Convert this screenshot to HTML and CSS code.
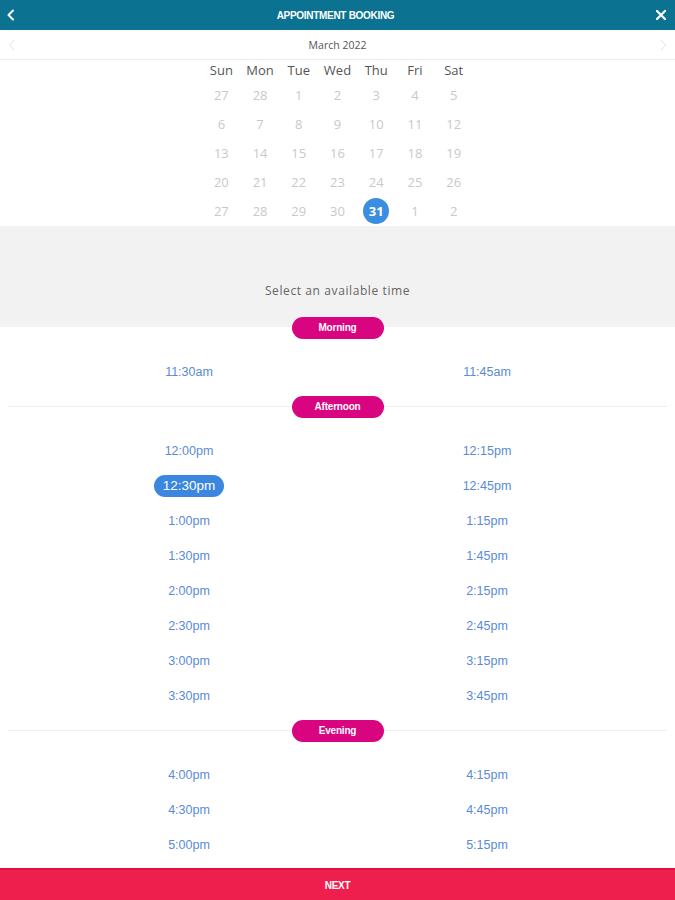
FILE: index.html
```
<!DOCTYPE html>
<html>
<head>
<meta charset="utf-8">
<link rel="stylesheet" href="styles.css">
</head>
<body>
<div class="app">
  <header class="topbar">
    <svg class="icon back" width="10" height="12" viewBox="0 0 10 12"><path d="M7 1.5 L2.5 6 L7 10.5" fill="none" stroke="#fff" stroke-width="2" stroke-linecap="round" stroke-linejoin="round"/></svg>
    <div class="title">APPOINTMENT BOOKING</div>
    <svg class="icon close" width="12" height="12" viewBox="0 0 12 12"><path d="M2 2 L10 10 M10 2 L2 10" fill="none" stroke="#fff" stroke-width="2.2" stroke-linecap="round"/></svg>
  </header>
  <div class="monthbar">
    <svg class="chev" width="8" height="12" viewBox="0 0 8 12"><path d="M6 1 L1.5 6 L6 11" fill="none" stroke="#e2e2e2" stroke-width="1"/></svg>
    <div class="month">March 2022</div>
    <svg class="chev" width="8" height="12" viewBox="0 0 8 12"><path d="M2 1 L6.5 6 L2 11" fill="none" stroke="#e2e2e2" stroke-width="1"/></svg>
  </div>
  <div class="calendar">
    <div class="wd">Sun</div><div class="wd">Mon</div><div class="wd">Tue</div><div class="wd">Wed</div><div class="wd">Thu</div><div class="wd">Fri</div><div class="wd">Sat</div>
    <div class="d">27</div><div class="d">28</div><div class="d">1</div><div class="d">2</div><div class="d">3</div><div class="d">4</div><div class="d">5</div>
    <div class="d">6</div><div class="d">7</div><div class="d">8</div><div class="d">9</div><div class="d">10</div><div class="d">11</div><div class="d">12</div>
    <div class="d">13</div><div class="d">14</div><div class="d">15</div><div class="d">16</div><div class="d">17</div><div class="d">18</div><div class="d">19</div>
    <div class="d">20</div><div class="d">21</div><div class="d">22</div><div class="d">23</div><div class="d">24</div><div class="d">25</div><div class="d">26</div>
    <div class="d">27</div><div class="d">28</div><div class="d">29</div><div class="d">30</div><div class="d"><span class="sel">31</span></div><div class="d">1</div><div class="d">2</div>
  </div>
  <div class="prompt">Select an available time</div>
  <div class="divider first"><span class="pill">Morning</span></div>
  <div class="times">
    <div class="t">11:30am</div><div class="t">11:45am</div>
  </div>
  <div class="divider"><span class="pill">Afternoon</span></div>
  <div class="times">
    <div class="t">12:00pm</div><div class="t">12:15pm</div>
    <div class="t"><span class="tsel">12:30pm</span></div><div class="t">12:45pm</div>
    <div class="t">1:00pm</div><div class="t">1:15pm</div>
    <div class="t">1:30pm</div><div class="t">1:45pm</div>
    <div class="t">2:00pm</div><div class="t">2:15pm</div>
    <div class="t">2:30pm</div><div class="t">2:45pm</div>
    <div class="t">3:00pm</div><div class="t">3:15pm</div>
    <div class="t">3:30pm</div><div class="t">3:45pm</div>
  </div>
  <div class="divider"><span class="pill">Evening</span></div>
  <div class="times last">
    <div class="t">4:00pm</div><div class="t">4:15pm</div>
    <div class="t">4:30pm</div><div class="t">4:45pm</div>
    <div class="t">5:00pm</div><div class="t">5:15pm</div>
  </div>
  <div class="next">NEXT</div>
</div>
</body>
</html>
```
FILE: styles.css
```
* { box-sizing: border-box; }
html, body { margin: 0; padding: 0; }
body { width: 675px; height: 900px; overflow: hidden; background: #fff; font-family: "Liberation Sans", Arial, sans-serif; }
.app { display: flex; flex-direction: column; height: 900px; overflow: hidden; }
.topbar { height: 30px; background: #0b7391; display: flex; align-items: center; justify-content: space-between; padding: 0 8px 0 6px; flex: none; }
.title { color: #fff; font-weight: bold; font-size: 10px; letter-spacing: -0.3px; }
.icon { display: block; }
.monthbar { height: 30px; display: flex; align-items: center; justify-content: space-between; padding: 0 8px; border-bottom: 1px solid #ececec; flex: none; }
.month { font-family: "Open Sans", sans-serif; font-size: 10.5px; color: #555; }
.chev { display: block; }
.calendar { width: 271px; margin: 0 auto; display: grid; grid-template-columns: repeat(7, 1fr); grid-template-rows: 20px repeat(5, 29px); padding-bottom: 1px; flex: none; }
.wd { font-family: "Open Sans", sans-serif; font-size: 13px; color: #555; display: flex; align-items: center; justify-content: center; }
.d { font-family: "Open Sans", sans-serif; font-size: 13px; color: #c9c9c9; display: flex; align-items: center; justify-content: center; }
.sel { width: 26px; height: 26px; border-radius: 50%; background: #3b8de0; color: #fff; font-weight: bold; display: flex; align-items: center; justify-content: center; font-size: 13px; }
.prompt { height: 101px; background: #f2f2f2; font-family: "Open Sans", sans-serif; font-size: 12px; letter-spacing: 0.6px; color: #666; display: flex; align-items: flex-end; justify-content: center; padding-bottom: 28px; flex: none; }
.divider { height: 1px; background: #efefef; margin: 0 8px; display: flex; align-items: center; justify-content: center; flex: none; }
.divider.first { background: transparent; margin: 0; }
.pill { width: 92px; height: 22px; border-radius: 11px; background: #d9047f; color: #fff; font-weight: bold; font-size: 10px; letter-spacing: -0.2px; display: flex; align-items: center; justify-content: center; flex: none; }
.times { display: grid; grid-template-columns: 298px 298px; padding: 26px 0 17px 40px; grid-auto-rows: 35px; flex: none; }
.times.last { padding-bottom: 0; }
.t { display: flex; align-items: center; justify-content: center; font-size: 12.5px; color: #5a8bd8; }
.tsel { background: #3b87e0; color: #fff; font-size: 13.5px; border-radius: 11px; height: 22px; padding: 0 9px; display: flex; align-items: center; }
.next { margin-top: auto; height: 32px; background: #ee1f4c; border-top: 2px solid #e2103f; color: #fff; font-weight: bold; font-size: 10px; letter-spacing: -0.3px; display: flex; align-items: center; justify-content: center; flex: none; }
```
